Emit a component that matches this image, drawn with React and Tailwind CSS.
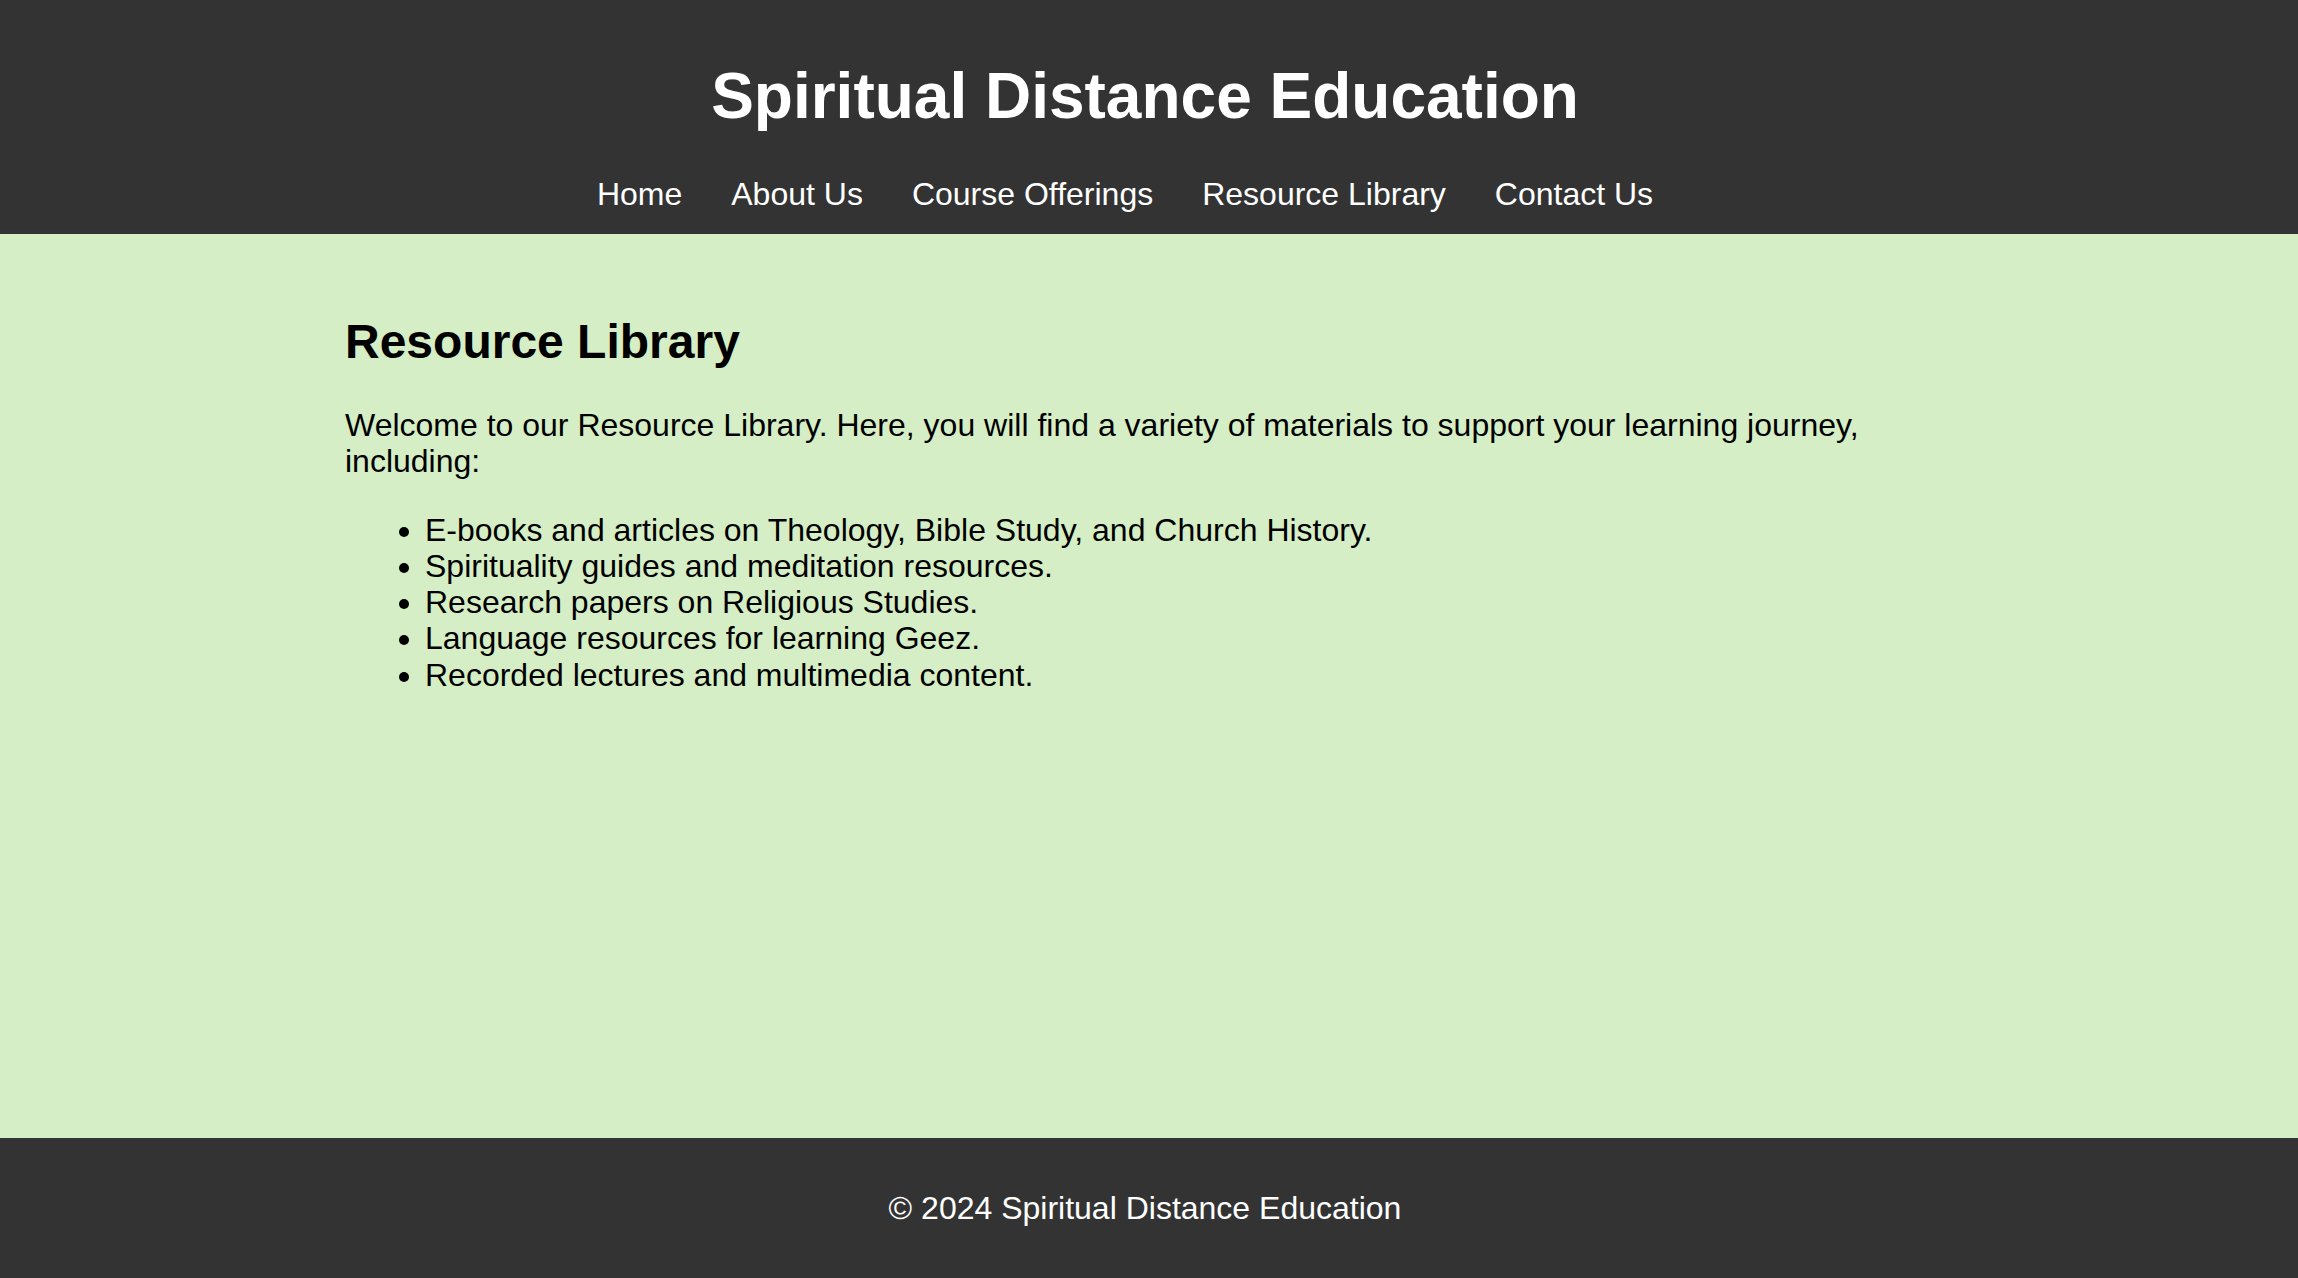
export default function App() {
  const links = ["Home", "About Us", "Course Offerings", "Resource Library", "Contact Us"];
  const items = [
    "E-books and articles on Theology, Bible Study, and Church History.",
    "Spirituality guides and meditation resources.",
    "Research papers on Religious Studies.",
    "Language resources for learning Geez.",
    "Recorded lectures and multimedia content.",
  ];
  return (
    <div className="min-h-screen flex flex-col bg-[#d5eec5] text-black font-['Liberation_Sans',Arial,sans-serif]">
      <header className="bg-[#333333] text-white pt-[16px] pb-[21px] pr-[8px]">
        <h1 className="text-[64px] font-bold leading-[74px] my-[43px] text-center">Spiritual Distance Education</h1>
        <nav className="flex justify-center gap-[49px] pr-[40px] text-[32px] leading-[37px]">
          {links.map((l) => (
            <a key={l} href="#" className="text-white no-underline">{l}</a>
          ))}
        </nav>
      </header>
      <main className="flex-1 pt-[40px] pr-[8px]">
        <div className="mx-auto w-[1600px]">
          <h2 className="text-[48px] font-bold leading-[55px] mt-[40px] mb-[38px]">Resource Library</h2>
          <p className="text-[32px] leading-[36.3px] mb-[32px]">
            Welcome to our Resource Library. Here, you will find a variety of materials to support your learning journey, including:
          </p>
          <ul className="list-disc pl-[80px] text-[32px] leading-[36.3px]">
            {items.map((i) => (
              <li key={i}>{i}</li>
            ))}
          </ul>
        </div>
      </main>
      <footer className="bg-[#333333] text-white h-[140px] flex items-center justify-center pr-[8px] text-[32px] leading-[37px]">
        © 2024 Spiritual Distance Education
      </footer>
    </div>
  );
}
